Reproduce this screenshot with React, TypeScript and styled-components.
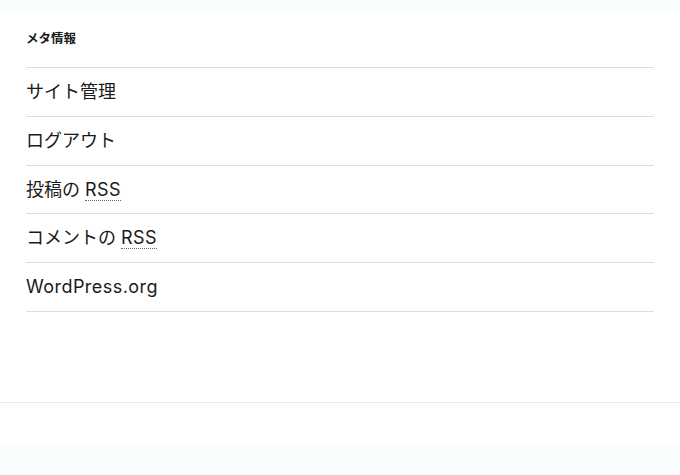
import React from 'react'
import styled, { createGlobalStyle } from 'styled-components'

const GlobalStyle = createGlobalStyle`
  html, body {
    margin: 0;
    padding: 0;
    background: #f9fdfd;
  }
  body {
    font-family: Inter, "Noto Sans CJK JP", "Noto Sans", sans-serif;
    color: #1a1a1a;
  }
`

const Page = styled.div`
  padding-top: 11px;
  padding-bottom: 29px;
`

const Main = styled.main`
  background: #fff;
`

const Widget = styled.aside`
  padding: 20px 26px 90px;
`

const WidgetTitle = styled.h2`
  margin: 0 0 20px;
  font-size: 12.5px;
  line-height: 16px;
  font-weight: 700;
  color: #1a1a1a;
`

const List = styled.ul`
  margin: 0;
  padding: 0;
  list-style: none;
  border-top: 1px solid #dcdcdc;
`

const Item = styled.li`
  padding: 12px 0;
  border-bottom: 1px solid #dcdcdc;
  font-size: 18px;
  line-height: 1.32;
`

const Link = styled.a`
  color: #1a1a1a;
  text-decoration: none;
`

const Latin = styled.span`
  letter-spacing: 0.45px;
`

const Abbr = styled.abbr`
  text-decoration: none;
  letter-spacing: 0.45px;
  border-bottom: 1px dotted #666;
`

const Footer = styled.div`
  height: 43px;
  border-top: 1px solid #eaeaea;
`

const items: React.ReactNode[] = [
  'サイト管理',
  'ログアウト',
  <>投稿の <Abbr title="Really Simple Syndication">RSS</Abbr></>,
  <>コメントの <Abbr title="Really Simple Syndication">RSS</Abbr></>,
  <Latin>WordPress.org</Latin>,
]

export default function App() {
  return (
    <>
      <GlobalStyle />
      <Page>
        <Main>
          <Widget>
            <WidgetTitle>メタ情報</WidgetTitle>
            <List>
              {items.map((item, i) => (
                <Item key={i}>
                  <Link href="#">{item}</Link>
                </Item>
              ))}
            </List>
          </Widget>
          <Footer />
        </Main>
      </Page>
    </>
  )
}
